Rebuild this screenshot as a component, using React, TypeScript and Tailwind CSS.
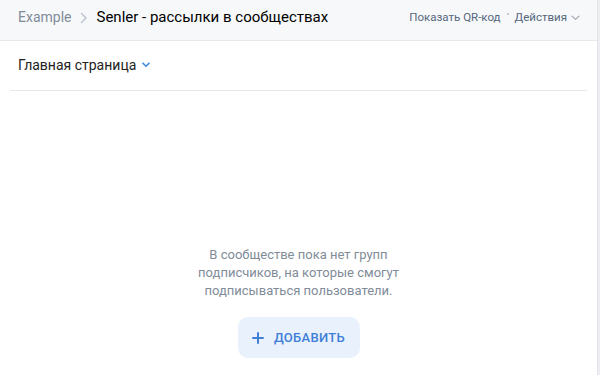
import React from "react";

export default function App() {
  return (
    <div className="w-[600px] h-[375px] bg-white overflow-hidden flex" style={{ fontFamily: "Roboto, 'Liberation Sans', sans-serif" }}>
      <div className="flex-1 flex flex-col min-w-0">
        <div className="h-[41px] shrink-0 bg-[#f7f8fa] border-b border-[#e7e8ec] flex items-center pl-[18px] pr-[17px] pb-[5px]">
          <span className="text-[14px] text-[#818c99]">Example</span>
          <svg width="8" height="12" viewBox="0 0 8 12" className="ml-[9px] mr-[8px]">
            <path d="M1.5 1.5 L6 6 L1.5 10.5" stroke="#b8c1cc" strokeWidth="1.4" fill="none" strokeLinecap="round" strokeLinejoin="round" />
          </svg>
          <span className="text-[15px] text-[#000000]">Senler - рассылки в сообществах</span>
          <div className="ml-auto flex items-center text-[11.5px] text-[#55677d]">
            <span>Показать QR-код</span>
            <span className="mx-[6px] w-[2px] h-[2px] rounded-full bg-[#b8c1cc] -mt-[7px]" />
            <span>Действия</span>
            <svg width="9" height="6" viewBox="0 0 9 6" className="ml-[4px]">
              <path d="M1 1.2 L4.5 4.3 L8 1.2" stroke="#99a2ad" strokeWidth="1.1" fill="none" strokeLinecap="round" strokeLinejoin="round" />
            </svg>
          </div>
        </div>
        <div className="px-[10px]">
          <div className="h-[50px] border-b border-[#e7e8ec] flex items-center pl-[8px]">
            <span className="text-[14px] text-[#222222]">Главная страница</span>
            <svg width="8" height="6" viewBox="0 0 8 6" className="ml-[6px] -mt-[2px]">
              <path d="M1 1.2 L4 4.2 L7 1.2" stroke="#3f8ae0" strokeWidth="1.6" fill="none" strokeLinecap="round" strokeLinejoin="round" />
            </svg>
          </div>
        </div>
        <div className="flex flex-col items-center pt-[155px]">
          <p className="text-[13px] leading-[18px] text-[#818c99] text-center w-[240px]">
            В сообществе пока нет групп подписчиков, на которые смогут подписываться пользователи.
          </p>
          <button className="mt-[17px] h-[41px] w-[122px] rounded-[10px] bg-[#e8f1fc] flex items-center justify-center gap-[10px] text-[#3f7fd8]">
            <svg width="12" height="12" viewBox="0 0 12 12">
              <path d="M6 1 V11 M1 6 H11" stroke="#3f7fd8" strokeWidth="2" strokeLinecap="round" />
            </svg>
            <span className="text-[13px] font-medium tracking-[0.3px]">ДОБАВИТЬ</span>
          </button>
        </div>
      </div>
      <div className="w-[3px] shrink-0 bg-[#eceef1] border-l border-[#e2e4e8]" />
    </div>
  );
}
